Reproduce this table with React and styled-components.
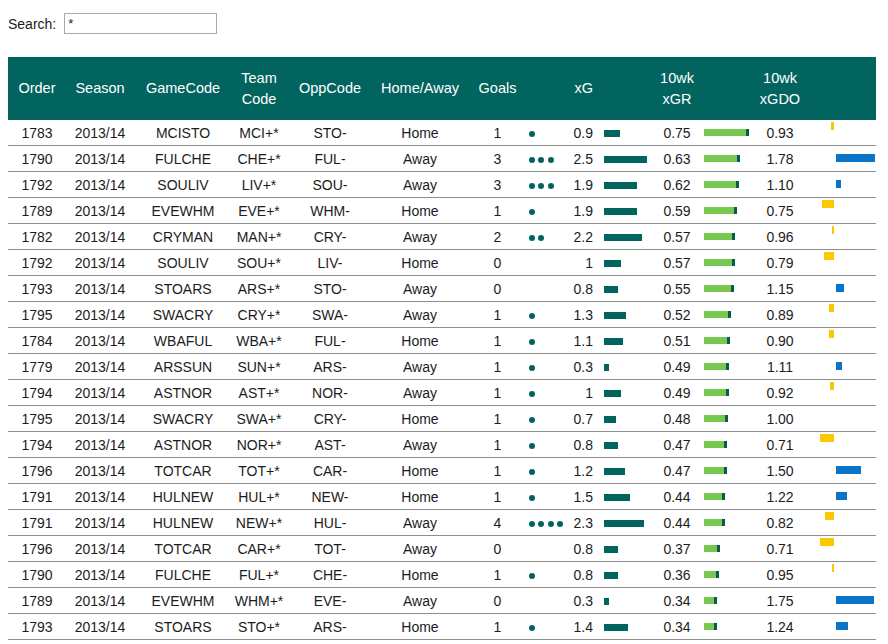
import React from 'react'
import styled, { createGlobalStyle } from 'styled-components'

const GlobalStyle = createGlobalStyle`
  body {
    margin: 8px;
    background: #fff;
    font-family: "Liberation Sans", Arial, sans-serif;
    color: #1c1c1c;
  }
`

const COLS = '58px 68px 98px 54px 88px 92px 63px 41px 28px 58px 42px 56px 52px 70px'

const rows = [
  ['1783', 'MCISTO', 'MCI+*', 'STO-', 'Home', 1, '0.9', '0.75', '0.93'],
  ['1790', 'FULCHE', 'CHE+*', 'FUL-', 'Away', 3, '2.5', '0.63', '1.78'],
  ['1792', 'SOULIV', 'LIV+*', 'SOU-', 'Away', 3, '1.9', '0.62', '1.10'],
  ['1789', 'EVEWHM', 'EVE+*', 'WHM-', 'Home', 1, '1.9', '0.59', '0.75'],
  ['1782', 'CRYMAN', 'MAN+*', 'CRY-', 'Away', 2, '2.2', '0.57', '0.96'],
  ['1792', 'SOULIV', 'SOU+*', 'LIV-', 'Home', 0, '1', '0.57', '0.79'],
  ['1793', 'STOARS', 'ARS+*', 'STO-', 'Away', 0, '0.8', '0.55', '1.15'],
  ['1795', 'SWACRY', 'CRY+*', 'SWA-', 'Away', 1, '1.3', '0.52', '0.89'],
  ['1784', 'WBAFUL', 'WBA+*', 'FUL-', 'Home', 1, '1.1', '0.51', '0.90'],
  ['1779', 'ARSSUN', 'SUN+*', 'ARS-', 'Away', 1, '0.3', '0.49', '1.11'],
  ['1794', 'ASTNOR', 'AST+*', 'NOR-', 'Away', 1, '1', '0.49', '0.92'],
  ['1795', 'SWACRY', 'SWA+*', 'CRY-', 'Home', 1, '0.7', '0.48', '1.00'],
  ['1794', 'ASTNOR', 'NOR+*', 'AST-', 'Away', 1, '0.8', '0.47', '0.71'],
  ['1796', 'TOTCAR', 'TOT+*', 'CAR-', 'Home', 1, '1.2', '0.47', '1.50'],
  ['1791', 'HULNEW', 'HUL+*', 'NEW-', 'Home', 1, '1.5', '0.44', '1.22'],
  ['1791', 'HULNEW', 'NEW+*', 'HUL-', 'Away', 4, '2.3', '0.44', '0.82'],
  ['1796', 'TOTCAR', 'CAR+*', 'TOT-', 'Away', 0, '0.8', '0.37', '0.71'],
  ['1790', 'FULCHE', 'FUL+*', 'CHE-', 'Home', 1, '0.8', '0.36', '0.95'],
  ['1789', 'EVEWHM', 'WHM+*', 'EVE-', 'Away', 0, '0.3', '0.34', '1.75'],
  ['1793', 'STOARS', 'STO+*', 'ARS-', 'Home', 1, '1.4', '0.34', '1.24'],
]

const SearchBar = styled.div`
  display: flex;
  align-items: center;
  gap: 8px;
  margin-top: 5px;
  height: 21px;
  font-size: 14px;
`

const SearchInput = styled.input`
  box-sizing: border-box;
  width: 153px;
  height: 21px;
  border: 1px solid #a9a9a9;
  padding: 1px 3px;
  font-family: "Liberation Sans", Arial, sans-serif;
  font-size: 13px;
  color: #222;
  outline: none;
`

const Table = styled.div`
  margin-top: 23px;
  width: 868px;
`

const HeadRow = styled.div`
  display: grid;
  grid-template-columns: ${COLS};
  height: 63px;
  background: #02645f;
  color: #fff;
  font-size: 14.5px;
  line-height: 21px;
`

const HeadCell = styled.div`
  display: flex;
  flex-direction: column;
  justify-content: center;
  align-items: ${p => (p.$right ? 'flex-end' : 'center')};
  text-align: center;
  padding-right: ${p => (p.$right ? '5px' : '0')};
`

const Row = styled.div`
  display: grid;
  grid-template-columns: ${COLS};
  height: 25px;
  border-bottom: 1px solid #8f8f8f;
  font-size: 14px;
`

const Cell = styled.div`
  display: flex;
  align-items: center;
  justify-content: ${p => (p.$right ? 'flex-end' : 'center')};
  padding-right: ${p => (p.$right ? '5px' : '0')};
  white-space: nowrap;
`

const DotCell = styled.div`
  display: flex;
  align-items: center;
  gap: 3.3px;
  padding-top: 2px;
`

const Dot = styled.span`
  width: 6px;
  height: 6px;
  border-radius: 50%;
  background: #02645f;
`

const BarCell = styled.div`
  display: flex;
  align-items: center;
  padding-left: 6px;
`

const XgBar = styled.div`
  height: 7px;
  background: #02645f;
  margin-top: 1px;
`

const XgrBar = styled.div`
  height: 7px;
  background: #78c850;
  border-right: 3px solid #0a5a4f;
  box-sizing: border-box;
`

const DiffCell = styled.div`
  display: grid;
  grid-template-columns: 28px 40px;
  column-gap: 2px;
`

const DiffBar = styled.div`
  height: 8px;
  margin-top: ${p => (p.$up ? '8px' : '2px')};
  justify-self: ${p => (p.$up ? 'start' : 'end')};
  grid-column: ${p => (p.$up ? 2 : 1)};
  background: ${p => (p.$up ? '#0a74c8' : '#fcc800')};
`

function Diff({ value }) {
  const v = parseFloat(value) - 1
  if (Math.abs(v) < 0.001) return <DiffCell />
  const w = Math.abs(v) * 50
  return (
    <DiffCell>
      <DiffBar $up={v > 0} style={{ width: w }} />
    </DiffCell>
  )
}

export default function App() {
  return (
    <>
      <GlobalStyle />
      <SearchBar>
        <span>Search:</span>
        <SearchInput defaultValue="*" />
      </SearchBar>
      <Table>
        <HeadRow>
          <HeadCell>Order</HeadCell>
          <HeadCell>Season</HeadCell>
          <HeadCell>GameCode</HeadCell>
          <HeadCell><span>Team</span><span>Code</span></HeadCell>
          <HeadCell>OppCode</HeadCell>
          <HeadCell>Home/Away</HeadCell>
          <HeadCell>Goals</HeadCell>
          <HeadCell />
          <HeadCell $right>xG</HeadCell>
          <HeadCell />
          <HeadCell><span>10wk</span><span>xGR</span></HeadCell>
          <HeadCell />
          <HeadCell><span>10wk</span><span>xGDO</span></HeadCell>
          <HeadCell />
        </HeadRow>
        {rows.map((r, i) => (
          <Row key={i}>
            <Cell>{r[0]}</Cell>
            <Cell>2013/14</Cell>
            <Cell>{r[1]}</Cell>
            <Cell>{r[2]}</Cell>
            <Cell>{r[3]}</Cell>
            <Cell>{r[4]}</Cell>
            <Cell>{r[5]}</Cell>
            <DotCell>
              {Array.from({ length: r[5] }).map((_, k) => <Dot key={k} />)}
            </DotCell>
            <Cell $right>{r[6]}</Cell>
            <BarCell>
              <XgBar style={{ width: parseFloat(r[6]) * 17.3 }} />
            </BarCell>
            <Cell>{r[7]}</Cell>
            <BarCell>
              <XgrBar style={{ width: parseFloat(r[7]) * 77.4 - 13 }} />
            </BarCell>
            <Cell>{r[8]}</Cell>
            <Diff value={r[8]} />
          </Row>
        ))}
      </Table>
    </>
  )
}
